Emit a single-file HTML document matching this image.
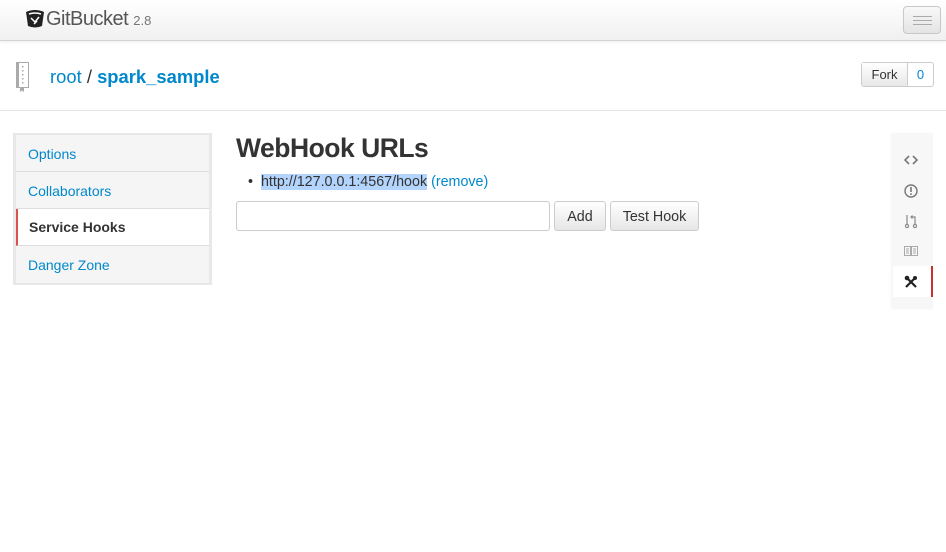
<!DOCTYPE html>
<html><head><meta charset="utf-8"><style>
*{box-sizing:border-box}
body{margin:0;width:946px;height:552px;background:#fff;font-family:"Liberation Sans",Arial,sans-serif;font-size:14px;color:#333;position:relative;overflow:hidden}
.nav{position:absolute;left:0;top:0;width:946px;height:41px;background:linear-gradient(#fff,#f0f0f0);border-bottom:1px solid #d4d4d4;box-shadow:0 1px 3px rgba(0,0,0,.08)}
.brand{position:absolute;left:46px;top:8px;font-size:20px;color:#555;letter-spacing:-0.5px}
.brand small{font-size:13px;color:#777;letter-spacing:0}
.hb{position:absolute;left:903px;top:6px;width:38px;height:28px;border:1px solid #c8c8c8;border-radius:4px;background:linear-gradient(#f8f8f8,#e4e4e4)}
.hb i{position:absolute;left:9px;width:19px;height:1px;background:#aaa}
.title{position:absolute;left:50px;top:66px;font-size:18.4px;color:#0088cc}
.title b{font-weight:bold}
.title span{color:#333}
.fork{position:absolute;left:861px;top:62px;width:73px;height:25px;border:1px solid #ccc;border-radius:3px;font-size:13px;display:flex}
.fork .a{width:46px;background:linear-gradient(#fff,#e8e8e8);border-right:1px solid #ccc;text-align:center;line-height:23px;color:#333}
.fork .b{flex:1;text-align:center;line-height:23px;color:#0088cc}
.sep{position:absolute;left:0;top:110px;width:946px;height:1px;background:#e5e5e5}
.side{position:absolute;left:13px;top:133px;width:199px;height:152px;background:#e8e8e8;padding:2px 3px}
.side div{height:37px;background:#f5f5f5;border-bottom:1px solid #ddd;color:#0088cc;padding-left:12px;line-height:39px;font-size:14px}
.side div.act{background:#fff;color:#333;font-weight:bold;border-left:2px solid #d9534f;padding-left:11px;line-height:37px}
h1{position:absolute;left:236px;top:133px;margin:0;font-size:26.5px;font-weight:bold;color:#333;letter-spacing:-0.5px}
.li{position:absolute;left:248px;top:174px;font-size:14.3px}
.li .sel{background:#b3d4fc}
.li a{color:#0088cc}
input{position:absolute;left:236px;top:201px;width:314px;height:30px;border:1px solid #ccc;border-radius:3px}
.btn{position:absolute;top:201px;height:30px;border:1px solid #ccc;border-radius:3px;background:linear-gradient(#fff,#e6e6e6);text-align:center;line-height:30px;font-size:14.3px;color:#333}
.rm{position:absolute;left:893px;top:133px;width:40px;height:176px;background:#f7f7f7;box-shadow:-2px 0 2px rgba(0,0,0,.04)}
.rm .act{position:absolute;left:0;top:133px;width:40px;height:31px;background:#fff;border-right:2px solid #c9302c}
.rm svg{position:absolute}
</style></head><body>
<div class="nav">
<svg style="position:absolute;left:25px;top:9px" width="20" height="20" viewBox="0 0 20 20"><path d="M1 3 Q10 -1 19 3 L17 17 Q10 20 3 17 Z" fill="#222"/><path d="M4 5 Q10 3 16 5" stroke="#fff" stroke-width="1.5" fill="none"/><path d="M6 9 L10 13 L14 8 M9 15 L12 12" stroke="#fff" stroke-width="1.5" fill="none"/></svg>
<div class="brand">GitBucket <small>2.8</small></div>
<div class="hb"><i style="top:9px"></i><i style="top:13px"></i><i style="top:17px"></i></div>
</div>
<svg style="position:absolute;left:16px;top:62px" width="13" height="30" viewBox="0 0 13 30"><rect x="0.5" y="0.5" width="12" height="25" fill="#fff" stroke="#aaa"/><rect x="0" y="0" width="3" height="26" fill="#aaa"/><g fill="#aaa"><rect x="6" y="4" width="1.5" height="1.5"/><rect x="6" y="8" width="1.5" height="1.5"/><rect x="6" y="12" width="1.5" height="1.5"/><rect x="6" y="16" width="1.5" height="1.5"/><rect x="6" y="20" width="1.5" height="1.5"/></g><path d="M4 25 v5 l2-1.5 l2 1.5 v-5z" fill="#aaa"/></svg>
<div class="title">root <span>/</span> <b>spark_sample</b></div>
<div class="fork"><div class="a">Fork</div><div class="b">0</div></div>
<div class="sep"></div>
<div class="side">
<div>Options</div><div>Collaborators</div><div class="act">Service Hooks</div><div style="border-bottom:none">Danger Zone</div>
</div>
<h1>WebHook URLs</h1>
<div class="li">&bull;&nbsp; <span class="sel">http://127.0.0.1:4567/hook</span> <a>(remove)</a></div>
<input>
<div class="btn" style="left:554px;width:52px">Add</div>
<div class="btn" style="left:610px;width:89px">Test Hook</div>
<div class="rm">
<div class="act"></div>
<svg style="left:11px;top:21px" width="14" height="12" viewBox="0 0 14 12"><path d="M5 2 L1 6 L5 10 M9 2 L13 6 L9 10" stroke="#777" stroke-width="1.6" fill="none"/></svg>
<svg style="left:11px;top:51px" width="14" height="14" viewBox="0 0 14 14"><circle cx="7" cy="7" r="6" stroke="#777" stroke-width="1.4" fill="none"/><rect x="6.2" y="3" width="1.6" height="5" fill="#777"/><rect x="6.2" y="9.3" width="1.6" height="1.6" fill="#777"/></svg>
<svg style="left:12px;top:80px" width="12" height="16" viewBox="0 0 12 16"><g stroke="#888" stroke-width="1.2" fill="none"><circle cx="2" cy="13" r="1.6"/><circle cx="10" cy="13" r="1.6"/><path d="M2 2 V11 M10 11 V4 H6 M7.5 2.5 L6 4 L7.5 5.5"/></g></svg>
<svg style="left:11px;top:113px" width="14" height="10" viewBox="0 0 14 10"><g stroke="#aaa" fill="none"><rect x="0.5" y="0.5" width="6" height="9"/><rect x="7.5" y="0.5" width="6" height="9"/><path d="M2 3h3M2 5h3M2 7h3M9 3h3M9 5h3M9 7h3"/></g></svg>
<svg style="left:11px;top:142px" width="14" height="14" viewBox="0 0 14 14"><path d="M2 2 L12 12 M12 2 L2 12" stroke="#222" stroke-width="2.2"/><circle cx="3" cy="3" r="2.3" fill="#222"/><circle cx="11" cy="3" r="2" fill="#222"/></svg>
</div>
</body></html>
